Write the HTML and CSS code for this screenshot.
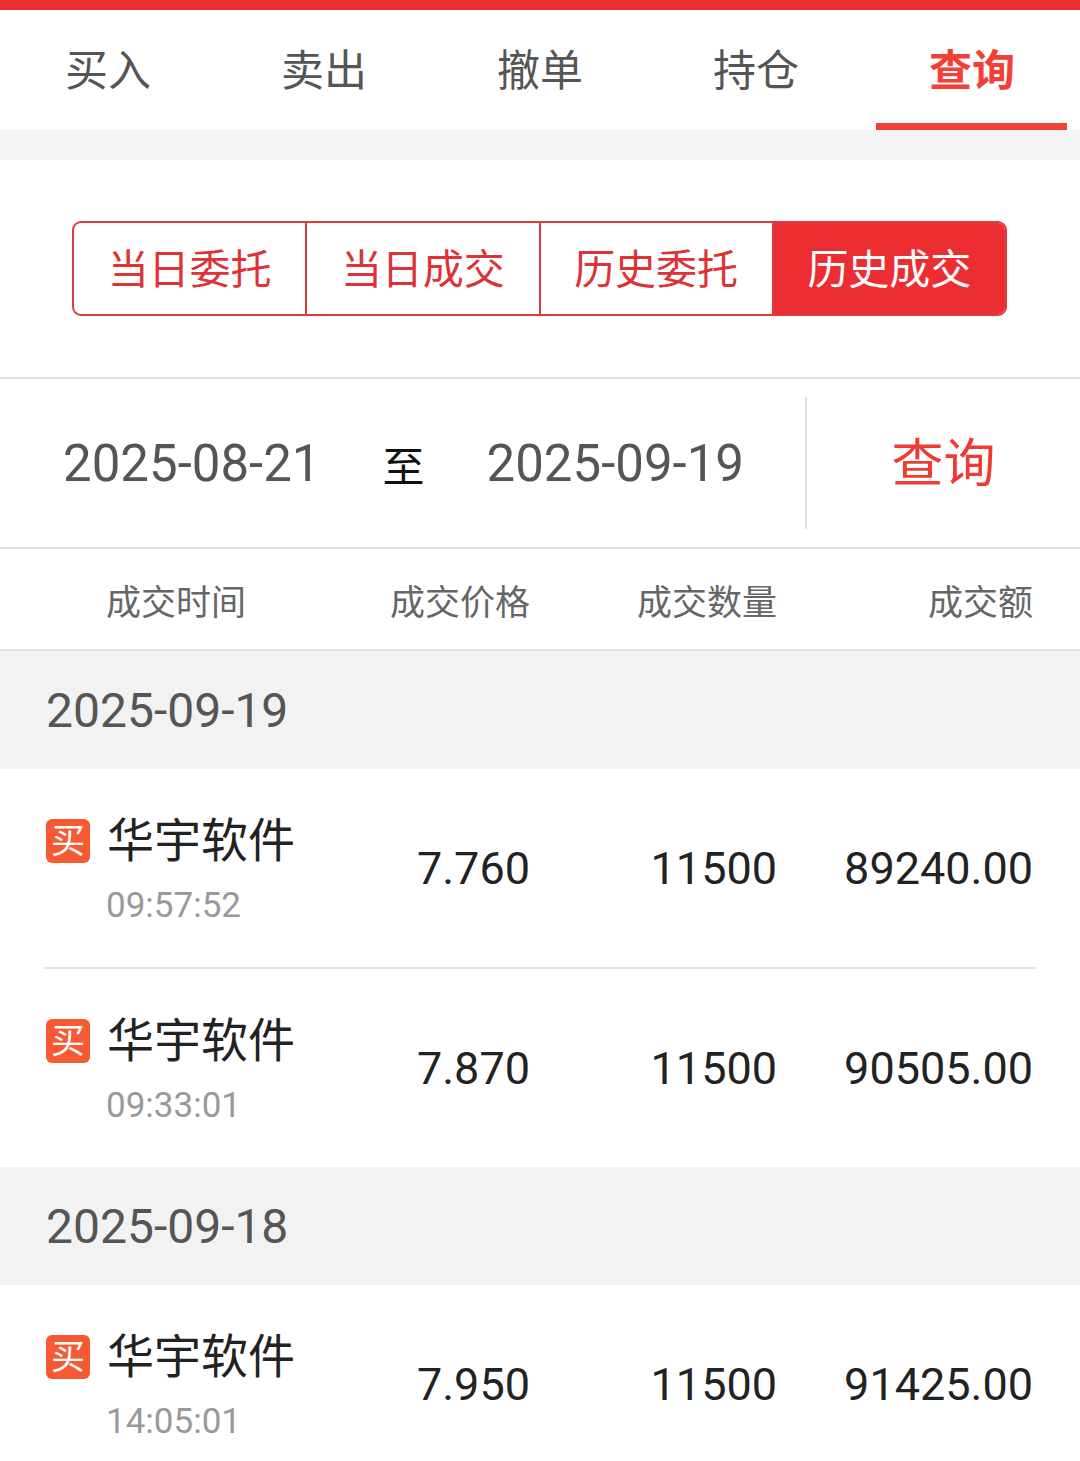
FILE: index.html
```html
<!DOCTYPE html>
<html lang="zh-CN">
<head>
    <meta charset="UTF-8">
    <meta name="viewport" content="width=device-width, initial-scale=1.0">
    <title>查询</title>
    <link rel="stylesheet" href="styles.css">
</head>
<body>
    <div class="status-bar"></div>

    <!-- Top tabs -->
    <nav class="tabs">
        <div class="tab">买入</div>
        <div class="tab">卖出</div>
        <div class="tab">撤单</div>
        <div class="tab">持仓</div>
        <div class="tab active">查询</div>
    </nav>
    <div class="gap-band"></div>

    <!-- Query type selector -->
    <section class="segment-wrap">
        <div class="segment">
            <div class="seg-item">当日委托</div>
            <div class="seg-item">当日成交</div>
            <div class="seg-item">历史委托</div>
            <div class="seg-item active">历史成交</div>
        </div>
    </section>

    <!-- Date range -->
    <section class="date-row">
        <div class="date-range">
            <span class="date">2025-08-21</span>
            <span class="to">至</span>
            <span class="date">2025-09-19</span>
        </div>
        <div class="query-btn">查询</div>
    </section>

    <!-- Table header -->
    <div class="grid-row table-head">
        <div class="col-name">成交时间</div>
        <div class="col-num">成交价格</div>
        <div class="col-num">成交数量</div>
        <div class="col-num">成交额</div>
    </div>

    <div id="list"></div>

    <script>
        // Trade records grouped by day
        const groups = [
            {
                day: '2025-09-19',
                trades: [
                    { name: '华宇软件', time: '09:57:52', price: '7.760', qty: '11500', amount: '89240.00' },
                    { name: '华宇软件', time: '09:33:01', price: '7.870', qty: '11500', amount: '90505.00' }
                ]
            },
            {
                day: '2025-09-18',
                trades: [
                    { name: '华宇软件', time: '14:05:01', price: '7.950', qty: '11500', amount: '91425.00' }
                ]
            }
        ];

        function renderList() {
            const list = document.getElementById('list');
            let html = '';
            groups.forEach(function(group) {
                html += '<div class="day-head">' + group.day + '</div>';
                group.trades.forEach(function(t, i) {
                    html += `
                        <div class="trade${i > 0 ? ' with-line' : ''}">
                            <div class="grid-row trade-row">
                                <div class="col-name">
                                    <div class="stock">
                                        <span class="badge">买</span>
                                        <span class="stock-name">${t.name}</span>
                                    </div>
                                    <div class="time">${t.time}</div>
                                </div>
                                <div class="col-num">${t.price}</div>
                                <div class="col-num">${t.qty}</div>
                                <div class="col-num">${t.amount}</div>
                            </div>
                        </div>`;
                });
            });
            list.innerHTML = html;
        }

        renderList();
    </script>
</body>
</html>
```

FILE: styles.css
```css
/* Base */
body {
    margin: 0;
    padding: 0;
    background: #fff;
    font-family: Roboto, "Noto Sans CJK SC", sans-serif;
    color: #222;
}

.status-bar {
    height: 10px;
    background-color: #ec2e33;
}

/* Top tabs */
.tabs {
    display: flex;
    height: 120px;
    background: #fff;
}

.tab {
    flex: 1;
    position: relative;
    display: flex;
    align-items: center;
    justify-content: center;
    font-size: 43px;
    color: #555;
    padding-bottom: 6px;
}

.tab.active {
    color: #f33f35;
    font-weight: bold;
}

.tab.active::after {
    content: "";
    position: absolute;
    left: 12px;
    right: 13px;
    bottom: 0;
    height: 7px;
    background-color: #f33f35;
}

.gap-band {
    height: 30px;
    background-color: #f4f4f4;
}

/* Segmented control */
.segment-wrap {
    padding: 61px 0 61px;
    border-bottom: 2px solid #e3e3e3;
}

.segment {
    display: flex;
    width: 935px;
    height: 95px;
    margin: 0 0 0 72px;
    box-sizing: border-box;
    border: 2px solid #e03c3e;
    border-radius: 9px;
    overflow: hidden;
}

.seg-item {
    flex: 1;
    display: flex;
    align-items: center;
    justify-content: center;
    font-size: 41px;
    color: #dd3236;
    border-left: 2px solid #e03c3e;
    padding-bottom: 6px;
}

.seg-item:first-child {
    border-left: none;
}

.seg-item.active {
    background-color: #ec2e33;
    color: #fff;
}

/* Date range */
.date-row {
    display: flex;
    height: 168px;
    border-bottom: 2px solid #e3e3e3;
}

.date-range {
    width: 807px;
    display: flex;
    align-items: center;
    padding-left: 63px;
    box-sizing: border-box;
    border-right: 2px solid #e3e3e3;
    margin: 18px 0 18px;
}

.date {
    font-size: 51px;
    color: #555;
}

.to {
    font-size: 42px;
    color: #111;
    margin: 0 62px 0 62px;
}

.query-btn {
    flex: 1;
    display: flex;
    align-items: center;
    justify-content: center;
    font-size: 52px;
    color: #ef3b32;
    padding-bottom: 8px;
}

/* Table grid */
.grid-row {
    display: grid;
    grid-template-columns: 254px 230px 247px 256px;
    padding: 0 47px 0 46px;
    align-items: center;
}

.col-num {
    text-align: right;
}

.table-head {
    height: 100px;
    font-size: 35px;
    color: #666;
    border-bottom: 2px solid #e3e3e3;
}

.table-head .col-name {
    padding-left: 60px;
}

.day-head {
    height: 118px;
    display: flex;
    align-items: center;
    padding-left: 46px;
    background-color: #f2f2f2;
    font-size: 48px;
    color: #555;
}

/* Trade rows */
.trade.with-line {
    border-top: 2px solid #e3e3e3;
    margin: 0 45px;
}

.trade.with-line .trade-row {
    padding: 0 2px 0 1px;
}

.trade-row {
    height: 198px;
    font-size: 45px;
    color: #222;
}

.col-name {
    white-space: nowrap;
}

.stock {
    display: flex;
    align-items: center;
}

.badge {
    width: 44px;
    height: 44px;
    border-radius: 6px;
    background-color: #f75a33;
    color: #fff;
    font-size: 34px;
    line-height: 44px;
    text-align: center;
    margin-right: 17px;
}

.stock-name {
    font-size: 47px;
    color: #222;
    line-height: 60px;
}

.time {
    font-size: 35px;
    color: #999;
    padding-left: 60px;
    margin-top: 14px;
}
```
